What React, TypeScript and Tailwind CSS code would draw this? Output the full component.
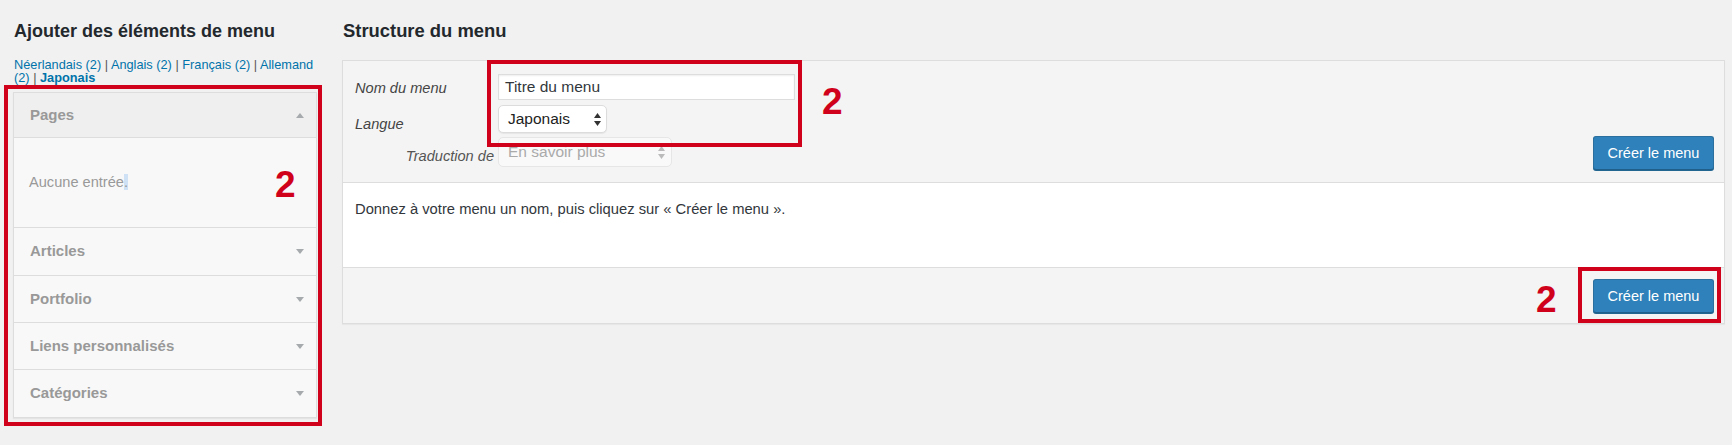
const LANGS = [
  { name: "Néerlandais", count: 2 },
  { name: "Anglais", count: 2 },
  { name: "Français", count: 2 },
  { name: "Allemand", count: 2 },
];

const SECTIONS = ["Articles", "Portfolio", "Liens personnalisés", "Catégories"];

function Arrow({ up }: { up?: boolean }) {
  return (
    <svg width="8" height="5" viewBox="0 0 8 5" className="shrink-0">
      {up ? <path d="M0 5 L4 0 L8 5 Z" fill="#a7aaad" /> : <path d="M0 0 L8 0 L4 5 Z" fill="#a7aaad" />}
    </svg>
  );
}

function UpDown({ color }: { color: string }) {
  return (
    <svg width="7" height="13" viewBox="0 0 7 13" className="shrink-0">
      <path d="M0 5 L3.5 0 L7 5 Z" fill={color} />
      <path d="M0 8 L7 8 L3.5 13 Z" fill={color} />
    </svg>
  );
}

function Mark({ className }: { className: string }) {
  return (
    <span
      className={`absolute text-[37px] font-bold leading-[37px] text-[#d0021b] ${className}`}
      style={{ fontFamily: '"Liberation Sans", Arial, sans-serif' }}
    >
      2
    </span>
  );
}

function BlueButton() {
  return (
    <button
      type="button"
      className="h-[34px] w-[121px] rounded-[3px] border border-[#2a6f9e] border-b-[#205f8a] bg-[#2e81ba] text-[14.5px] leading-[18px] text-white shadow-[0_1px_0_#216591]"
    >
      Créer le menu
    </button>
  );
}

export default function App() {
  return (
    <div
      className="flex min-h-[445px] bg-[#f1f1f1] pt-[19px] pr-[7px] pl-[4px] text-[#32373c]"
      style={{ fontFamily: '"Liberation Sans", Arial, sans-serif' }}
    >
      {/* colonne gauche */}
      <div className="w-[318px] shrink-0">
        <h2 className="pl-[10px] text-[18px] font-semibold leading-[24px] text-[#23282d]">
          Ajouter des éléments de menu
        </h2>
        <div className="mt-[16px] pl-[10px] text-[12.75px] leading-[12.5px] text-[#555]">
          {LANGS.map((l) => (
            <span key={l.name}>
              <span className="text-[#0073aa]">
                {l.name} ({l.count})
              </span>{" "}
              |{" "}
            </span>
          ))}
          <span className="font-bold text-[#0073aa]">Japonais</span>
        </div>

        <div className="mt-[1px] border-4 border-[#d0021b] pt-[3px] pr-px pb-[4px] pl-[5px]">
          <div className="border border-[#dddddd] bg-[#f8f8f8] shadow-[0_1px_1px_rgba(0,0,0,0.05)]">
            <div className="flex h-[45px] items-center justify-between border-b border-[#dddddd] bg-[#efefef] pr-[12px] pl-[16px]">
              <span className="text-[15px] font-semibold text-[#999]">Pages</span>
              <Arrow up />
            </div>
            <div className="relative flex h-[90px] items-center border-b border-[#dddddd] pl-[15px] text-[14.6px] text-[#999]">
              <span>
                Aucune entrée<span className="bg-[#cfe2f5]">.</span>
              </span>
              <Mark className="top-[28px] left-[261px]" />
            </div>
            {SECTIONS.map((s, i) => (
              <div
                key={s}
                className={`flex items-center justify-between pr-[12px] pl-[16px] ${i === 0 ? "h-[48px]" : "h-[47px]"} ${
                  i < SECTIONS.length - 1 ? "border-b border-[#dddddd]" : ""
                }`}
              >
                <span className="text-[15px] font-semibold text-[#999]">{s}</span>
                <Arrow />
              </div>
            ))}
          </div>
        </div>
      </div>

      {/* colonne droite */}
      <div className="ml-[20px] flex-1">
        <h2 className="pl-px text-[18.4px] font-semibold leading-[24px] text-[#23282d]">Structure du menu</h2>
        <div className="relative mt-[17px] border border-[#dddddd] bg-white shadow-[0_1px_1px_rgba(0,0,0,0.04)]">
          {/* en-tête */}
          <div className="flex justify-between border-b border-[#dddddd] bg-[#f4f4f4] pt-[13px] pr-[10px] pb-[12px] pl-[12px]">
            <div className="flex flex-col gap-[5px] pb-[3px]">
              <div className="flex items-start">
                <label className="w-[143px] pt-[5px] text-[14.6px] leading-[18px] text-[#444] italic">
                  Nom du menu
                </label>
                <div className="flex h-[26px] w-[297px] items-center border border-[#dddddd] bg-white pl-[6px] text-[15.5px] leading-[20px] text-[#32373c] shadow-[inset_0_1px_2px_rgba(0,0,0,0.07)]">
                  Titre du menu
                </div>
              </div>
              <div className="flex items-start">
                <label className="w-[143px] pt-[10px] text-[14.6px] leading-[18px] text-[#444] italic">Langue</label>
                <div className="flex h-[28px] w-[109px] items-center justify-between rounded-[5px] border border-[#dcdcdc] bg-white pr-[5px] pl-[9px] text-[15.5px] leading-[20px] text-[#222] shadow-[0_1px_1px_rgba(0,0,0,0.06)]">
                  Japonais
                  <UpDown color="#333" />
                </div>
              </div>
              <div className="-mt-px flex items-start">
                <label className="w-[143px] pt-[10px] pr-[4px] text-right text-[14.6px] leading-[18px] text-[#555] italic">
                  Traduction de
                </label>
                <div className="flex h-[30px] w-[174px] items-center justify-between rounded-[5px] border border-[#e6e6e6] bg-[#f9f9f9] pr-[6px] pl-[9px] text-[15.5px] leading-[20px] text-[#aaa]">
                  En savoir plus
                  <UpDown color="#bbb" />
                </div>
              </div>
            </div>
            <div className="self-end">
              <BlueButton />
            </div>
          </div>

          {/* corps */}
          <div className="h-[84px] pt-[16px] pl-[12px] text-[14.75px] leading-[20px] text-[#32373c]">
            Donnez à votre menu un nom, puis cliquez sur « Créer le menu ».
          </div>

          {/* pied */}
          <div className="relative flex justify-end border-t border-[#dddddd] bg-[#f4f4f4] pt-[11px] pr-[10px] pb-[10px]">
            <BlueButton />
            <div className="absolute -top-px right-[3px] h-[56px] w-[143px] border-4 border-[#d0021b]" />
            <Mark className="top-[13px] left-[1193px]" />
          </div>

          {/* annotations en-tête */}
          <div className="absolute -top-px left-[144px] h-[87px] w-[315px] border-4 border-[#d0021b]" />
          <Mark className="top-[22px] left-[479px]" />
        </div>
      </div>
    </div>
  );
}
